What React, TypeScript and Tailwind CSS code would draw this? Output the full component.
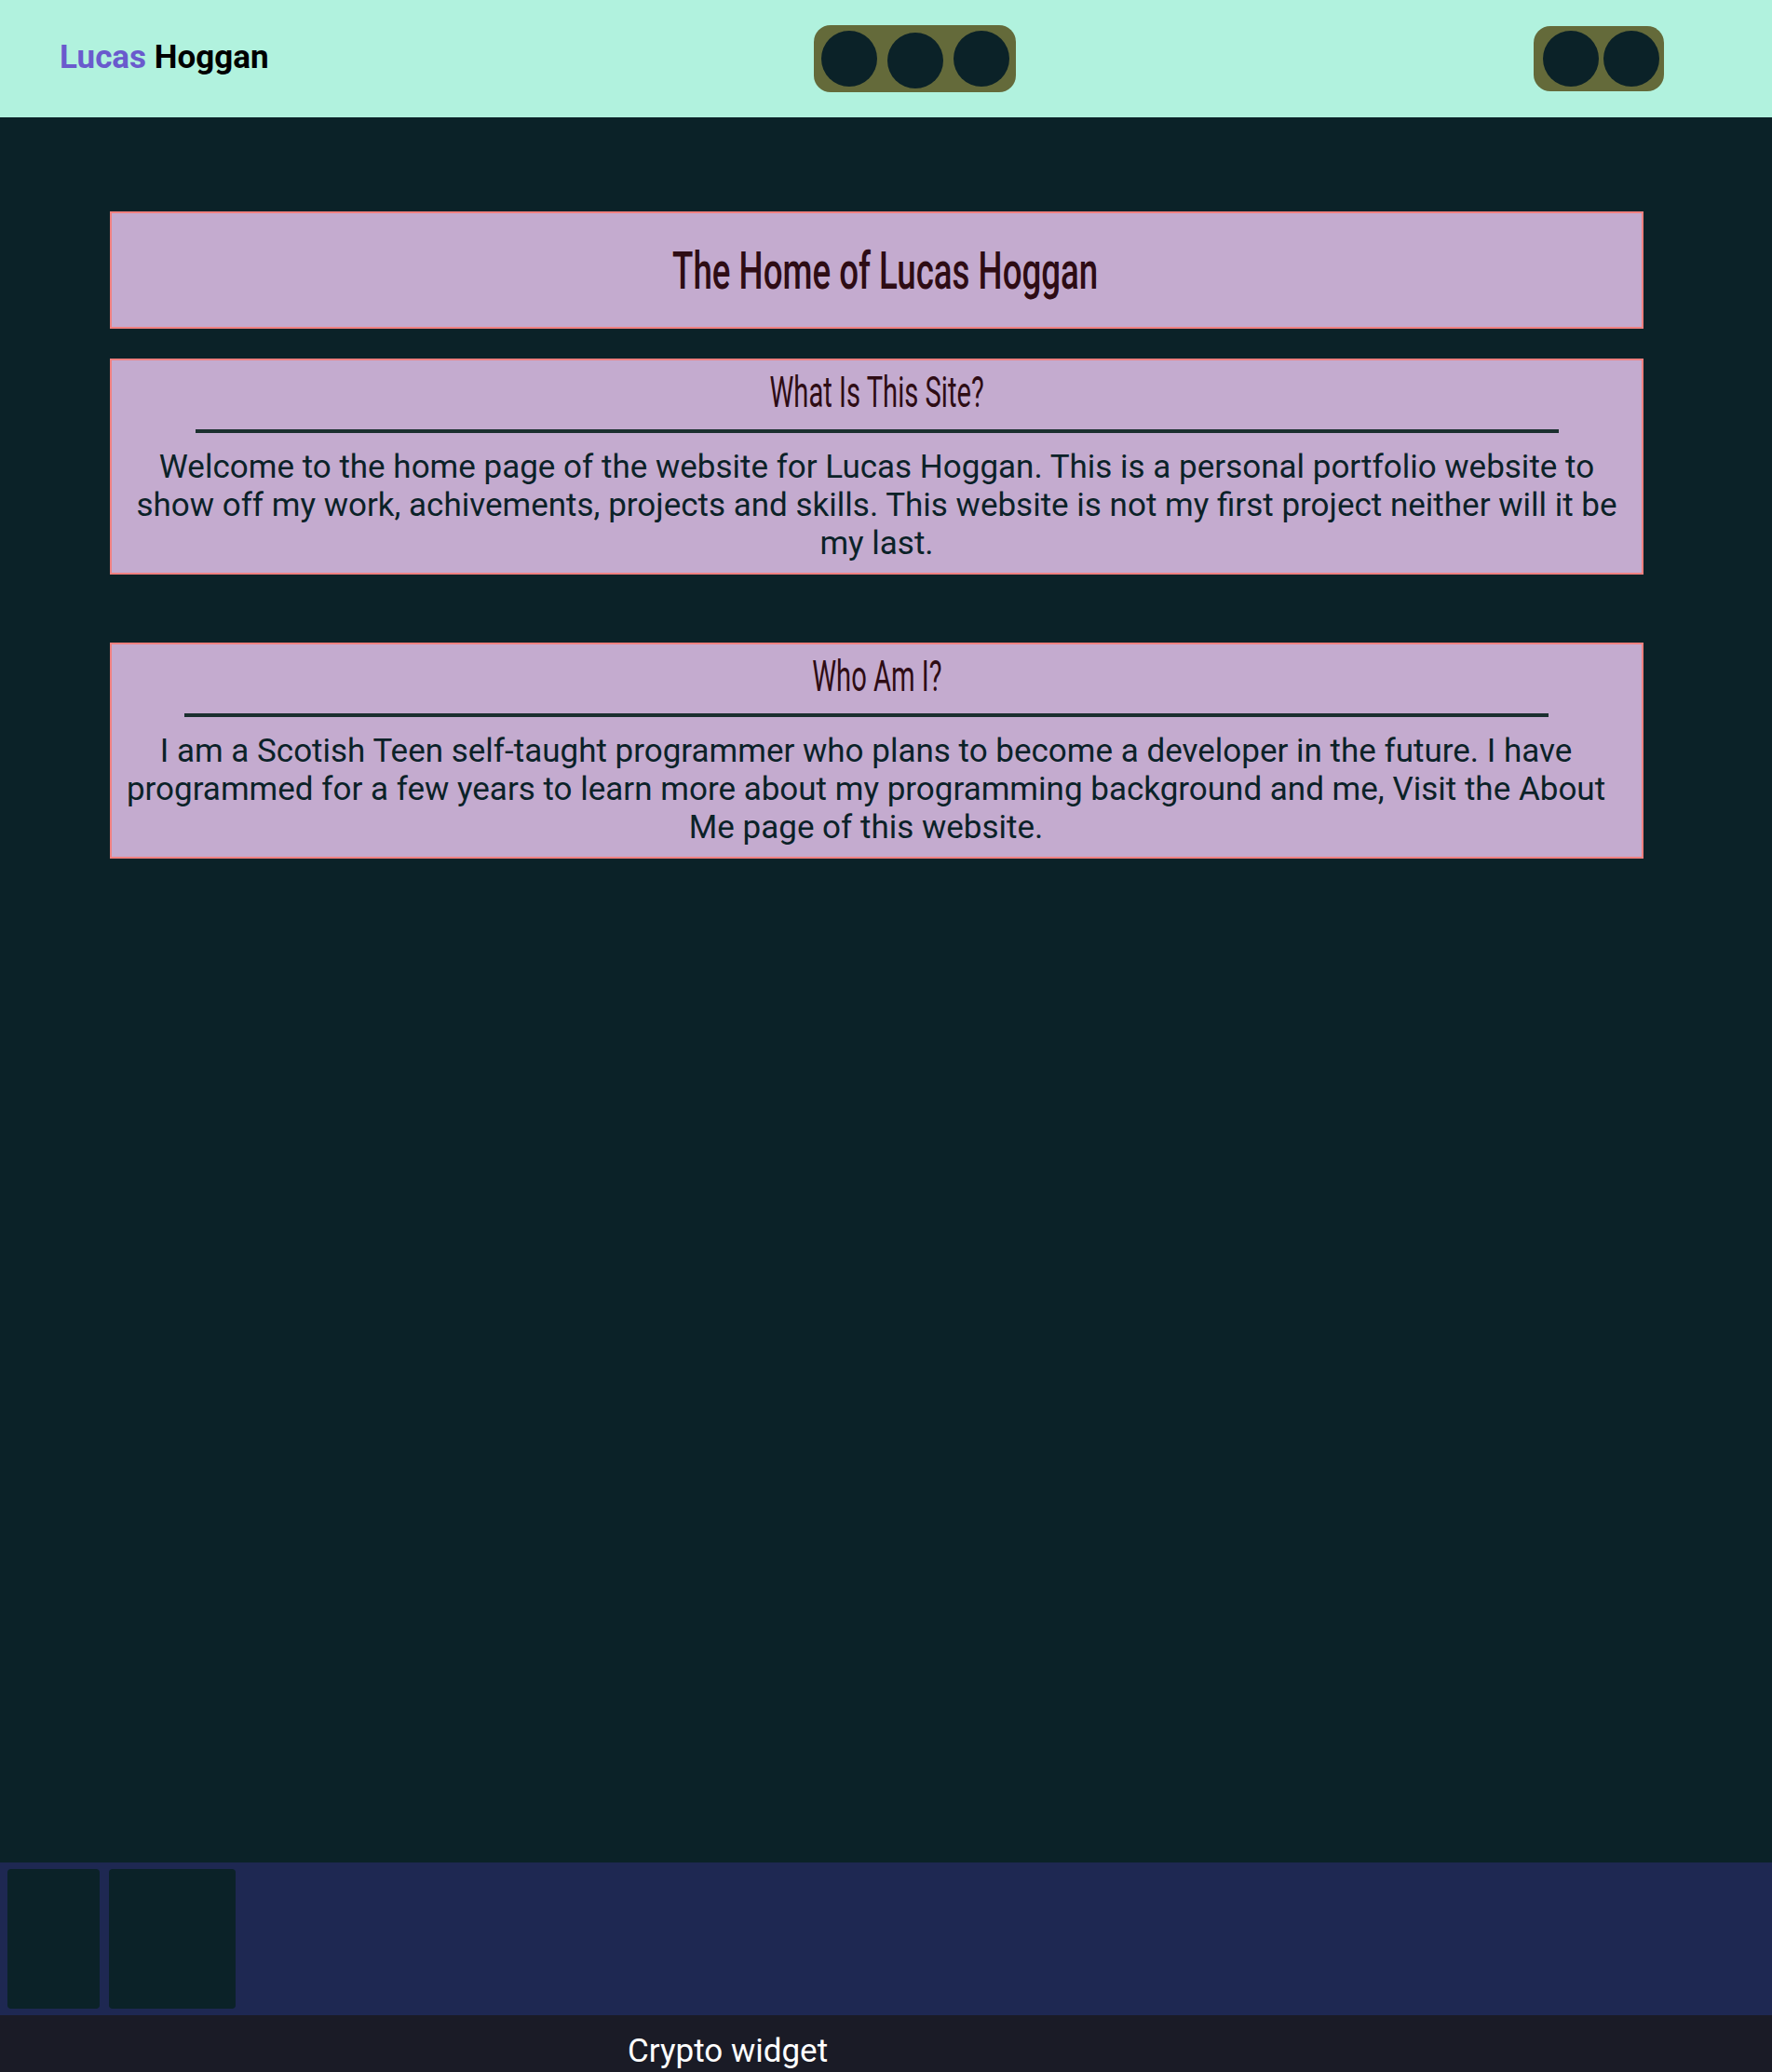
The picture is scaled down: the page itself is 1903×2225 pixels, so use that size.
export default function App() {
  return (
    <div
      className="min-h-screen flex flex-col bg-[#0b2228]"
      style={{ fontFamily: 'Roboto, "Noto Sans", sans-serif' }}
    >
      {/* Header */}
      <header className="h-[126px] flex items-center bg-[#b1f2de] pl-[64px]">
        <div className="text-[35px] font-bold leading-none w-[222px] whitespace-nowrap pb-[4px]">
          <span className="text-[#6a5acd]">Lucas</span> <span className="text-black">Hoggan</span>
        </div>
        <div className="ml-[588px] flex items-center gap-[11px] h-[72px] pl-[8px] pr-[7px] rounded-[18px] bg-[#646a3a]">
          <span className="w-[60px] h-[60px] rounded-full bg-[#0b2228]" />
          <span className="w-[60px] h-[60px] rounded-full bg-[#0b2228] mt-[4px]" />
          <span className="w-[60px] h-[60px] rounded-full bg-[#0b2228]" />
        </div>
        <div className="ml-[556px] flex items-center gap-[5px] h-[70px] pl-[10px] pr-[5px] rounded-[18px] bg-[#646a3a]">
          <span className="w-[60px] h-[60px] rounded-full bg-[#0b2228]" />
          <span className="w-[60px] h-[60px] rounded-full bg-[#0b2228]" />
        </div>
      </header>

      {/* Main */}
      <main className="flex-1 pl-[118px] pr-[138px] pt-[101px]">
        <div className="border-2 border-[#f08080] bg-[#c4abcf] pt-[35px] pb-[32px] pl-[19px] text-center">
          <h1 className="text-[55px] leading-none font-medium text-[#2e0c14]">
            <span className="inline-block scale-x-[0.667] whitespace-nowrap">The Home of Lucas Hoggan</span>
          </h1>
        </div>

        <section className="mt-[32px] border-2 border-[#f08080] bg-[#c4abcf] pt-[11px] pb-[11px] px-[10px] text-center">
          <h2 className="text-[46px] leading-none text-[#2e0c14]">
            <span className="inline-block scale-x-[0.634] whitespace-nowrap">What Is This Site?</span>
          </h2>
          <div className="mt-[17px] mx-auto w-[1464px] h-[4px] bg-[#1b2f2f]" />
          <p className="mt-[16px] text-[35px] leading-[41px] text-[#0b2228]">
            Welcome to the home page of the website for Lucas Hoggan. This is a personal portfolio website to
            show off my work, achivements, projects and skills. This website is not my first project neither will it be
            my last.
          </p>
        </section>

        <section className="mt-[73px] border-2 border-[#f08080] bg-[#c4abcf] pt-[11px] pb-[11px] px-[10px] text-center">
          <h2 className="text-[46px] leading-none text-[#2e0c14]">
            <span className="inline-block scale-x-[0.634] whitespace-nowrap">Who Am I?</span>
          </h2>
          <div className="pr-[23px]">
            <div className="mt-[17px] mx-auto w-[1465px] h-[4px] bg-[#1b2f2f]" />
            <p className="mt-[16px] text-[35px] leading-[41px] text-[#0b2228]">
              I am a Scotish Teen self-taught programmer who plans to become a developer in the future. I have
              programmed for a few years to learn more about my programming background and me, Visit the About
              Me page of this website.
            </p>
          </div>
        </section>
      </main>

      {/* Footer widgets */}
      <footer className="h-[164px] bg-[#1e2852] flex gap-[10px] px-[8px] py-[7px]">
        <div className="w-[99px] rounded-[4px] bg-[#0b2228]" />
        <div className="w-[136px] rounded-[4px] bg-[#0b2228]" />
      </footer>
      <div className="h-[61px] overflow-hidden bg-[#1a1b26] pl-[674px] pt-[13px]">
        <span className="text-[35px] text-white whitespace-nowrap">Crypto widget</span>
      </div>
    </div>
  )
}
